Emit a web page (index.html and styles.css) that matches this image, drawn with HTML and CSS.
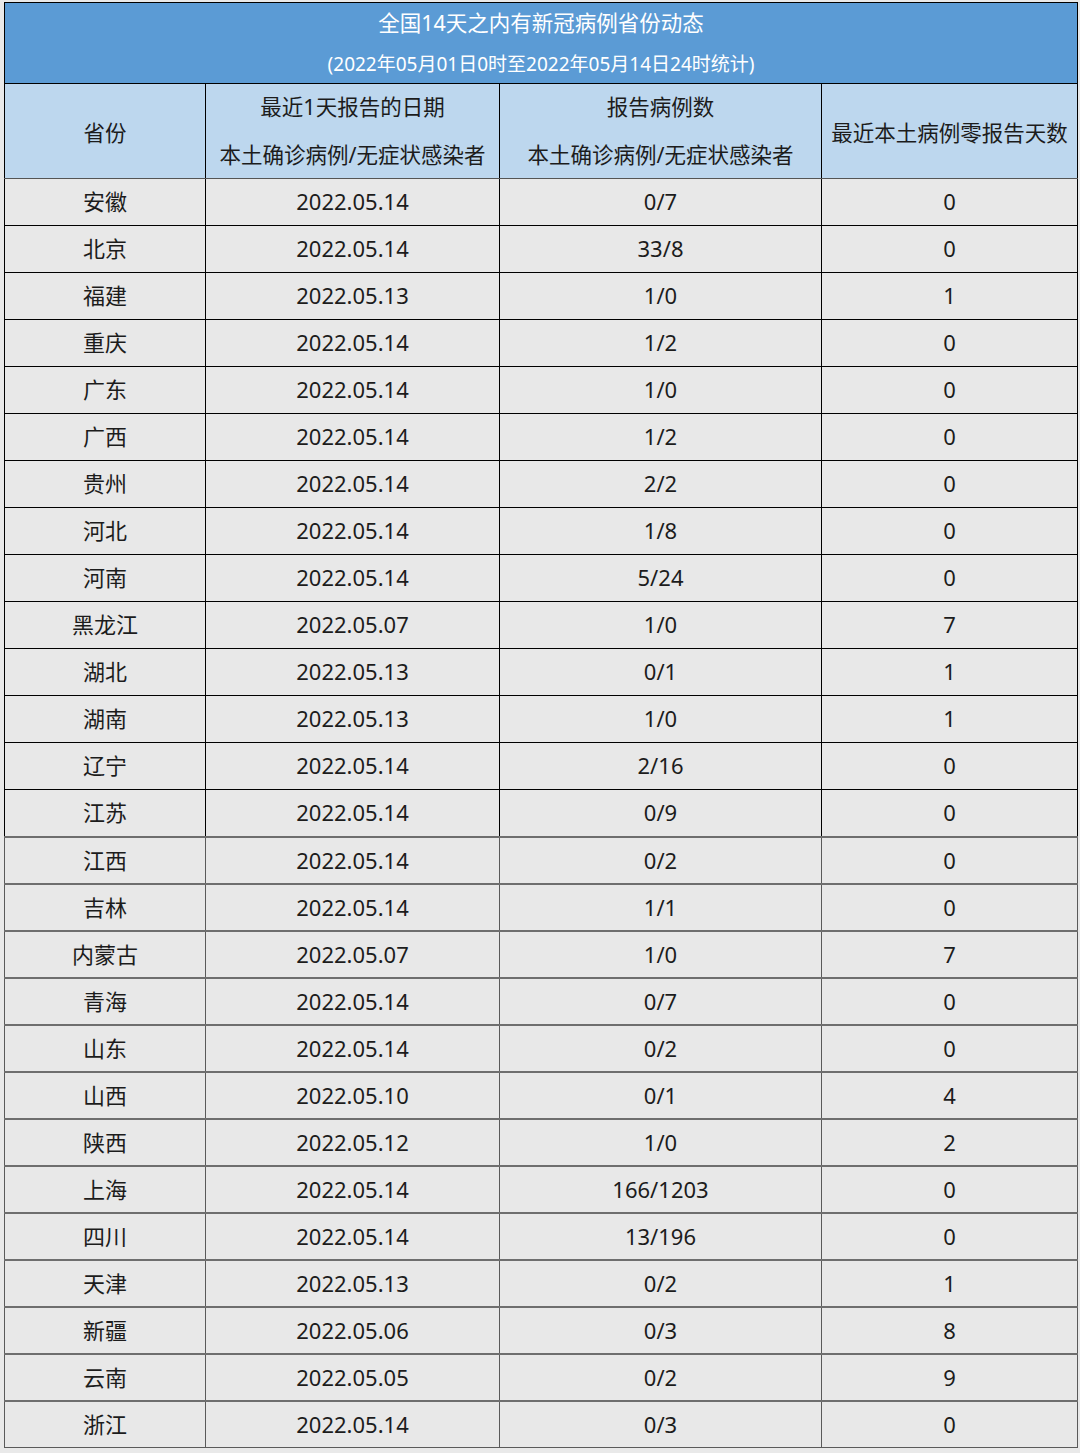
FILE: index.html
```html
<!DOCTYPE html>
<html lang="zh-CN">
<head>
<meta charset="utf-8">
<title>全国14天之内有新冠病例省份动态</title>
<link rel="stylesheet" href="styles.css">
</head>
<body>
<div class="wrap">
<table class="tbl">
  <colgroup>
    <col class="c1"><col class="c2"><col class="c3"><col class="c4">
  </colgroup>
  <thead>
    <tr class="title-row">
      <th colspan="4">
        <div class="t1">全国14天之内有新冠病例省份动态</div>
        <div class="t2">(2022年05月01日0时至2022年05月14日24时统计)</div>
      </th>
    </tr>
    <tr class="head-row">
      <th>省份</th>
      <th><div class="h1">最近1天报告的日期</div><div class="h2">本土确诊病例/无症状感染者</div></th>
      <th><div class="h1">报告病例数</div><div class="h2">本土确诊病例/无症状感染者</div></th>
      <th>最近本土病例零报告天数</th>
    </tr>
  </thead>
  <tbody>
    <tr><td>安徽</td><td>2022.05.14</td><td>0/7</td><td>0</td></tr>
    <tr><td>北京</td><td>2022.05.14</td><td>33/8</td><td>0</td></tr>
    <tr><td>福建</td><td>2022.05.13</td><td>1/0</td><td>1</td></tr>
    <tr><td>重庆</td><td>2022.05.14</td><td>1/2</td><td>0</td></tr>
    <tr><td>广东</td><td>2022.05.14</td><td>1/0</td><td>0</td></tr>
    <tr><td>广西</td><td>2022.05.14</td><td>1/2</td><td>0</td></tr>
    <tr><td>贵州</td><td>2022.05.14</td><td>2/2</td><td>0</td></tr>
    <tr><td>河北</td><td>2022.05.14</td><td>1/8</td><td>0</td></tr>
    <tr><td>河南</td><td>2022.05.14</td><td>5/24</td><td>0</td></tr>
    <tr><td>黑龙江</td><td>2022.05.07</td><td>1/0</td><td>7</td></tr>
    <tr><td>湖北</td><td>2022.05.13</td><td>0/1</td><td>1</td></tr>
    <tr><td>湖南</td><td>2022.05.13</td><td>1/0</td><td>1</td></tr>
    <tr><td>辽宁</td><td>2022.05.14</td><td>2/16</td><td>0</td></tr>
    <tr><td>江苏</td><td>2022.05.14</td><td>0/9</td><td>0</td></tr>
    <tr class="lo"><td>江西</td><td>2022.05.14</td><td>0/2</td><td>0</td></tr>
    <tr class="lo"><td>吉林</td><td>2022.05.14</td><td>1/1</td><td>0</td></tr>
    <tr class="lo"><td>内蒙古</td><td>2022.05.07</td><td>1/0</td><td>7</td></tr>
    <tr class="lo"><td>青海</td><td>2022.05.14</td><td>0/7</td><td>0</td></tr>
    <tr class="lo"><td>山东</td><td>2022.05.14</td><td>0/2</td><td>0</td></tr>
    <tr class="lo"><td>山西</td><td>2022.05.10</td><td>0/1</td><td>4</td></tr>
    <tr class="lo"><td>陕西</td><td>2022.05.12</td><td>1/0</td><td>2</td></tr>
    <tr class="lo"><td>上海</td><td>2022.05.14</td><td>166/1203</td><td>0</td></tr>
    <tr class="lo"><td>四川</td><td>2022.05.14</td><td>13/196</td><td>0</td></tr>
    <tr class="lo"><td>天津</td><td>2022.05.13</td><td>0/2</td><td>1</td></tr>
    <tr class="lo"><td>新疆</td><td>2022.05.06</td><td>0/3</td><td>8</td></tr>
    <tr class="lo"><td>云南</td><td>2022.05.05</td><td>0/2</td><td>9</td></tr>
    <tr class="lo"><td>浙江</td><td>2022.05.14</td><td>0/3</td><td>0</td></tr>
  </tbody>
</table>
</div>
</body>
</html>
```

FILE: styles.css
```css
html, body {
  margin: 0;
  padding: 0;
  background: #e9e9e9;
}

.wrap {
  padding: 2px 0 0 4px;
}

.tbl {
  width: 1073px;
  border-collapse: collapse;
  table-layout: fixed;
  font-family: "Noto Sans", "Noto Sans CJK SC", sans-serif;
  font-size: 22px;
  color: #1c1c1c;
  background: #e8e8e8;
}

.c1 { width: 201px; }
.c2 { width: 294px; }
.c3 { width: 322px; }
.c4 { width: 256px; }

.tbl th,
.tbl td {
  border: 1px solid #000;
  text-align: center;
  vertical-align: middle;
  padding: 0;
  font-weight: normal;
}

.title-row th {
  background: #5b9bd5;
  color: #ffffff;
  height: 80px;
}

.t1 {
  font-size: 21.5px;
  line-height: 28px;
  margin-bottom: 14px;
}

.t2 {
  font-size: 19px;
  line-height: 26px;
}

.head-row th {
  background: #bdd7ee;
  height: 94px;
  font-size: 21.5px;
  border-bottom-color: #555;
}

.h1 {
  line-height: 30px;
  margin-bottom: 18px;
}

.h2 {
  line-height: 30px;
}

.tbl tbody td {
  height: 44px;
  line-height: 28px;
  padding-bottom: 2px;
}

.tbl tbody tr.lo td {
  border-color: #5a5a5a;
  border-top: 2px solid #6e6e6e;
  height: 43px;
}
```
